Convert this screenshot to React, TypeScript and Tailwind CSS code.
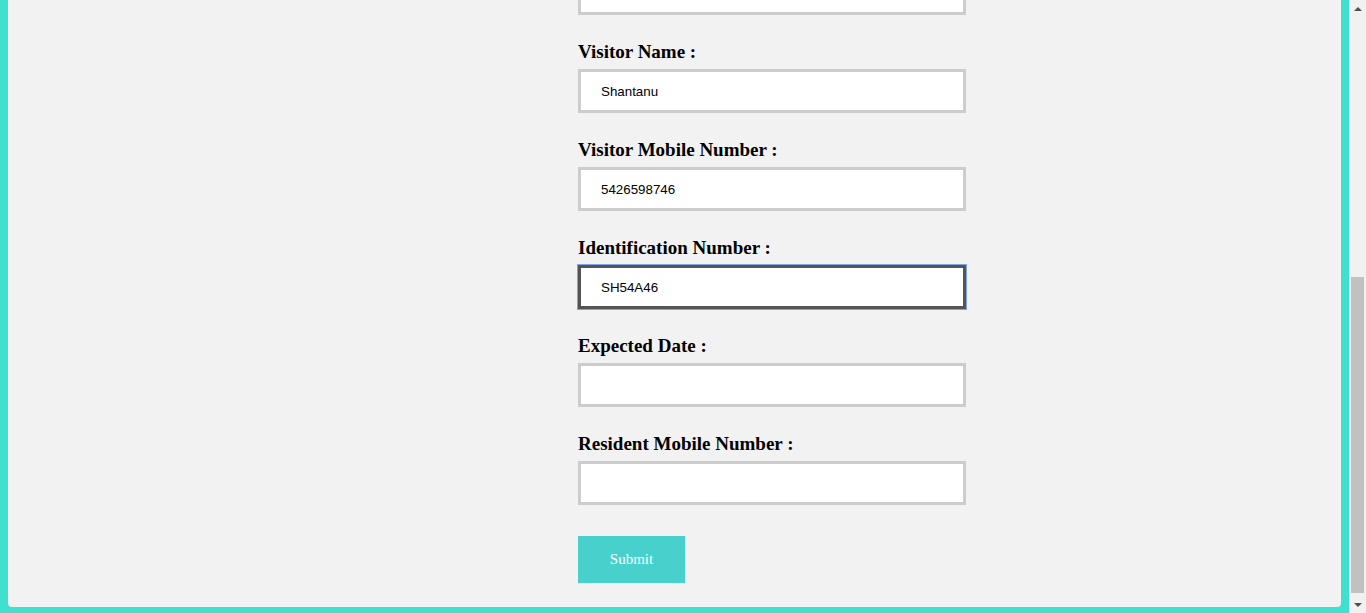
import React, { useLayoutEffect, useRef, useState } from 'react';

interface VisitorForm {
  flatNumber: string;
  residentName: string;
  purpose: string;
  vehicleNumber: string;
  visitorName: string;
  visitorMobile: string;
  idNumber: string;
  expectedDate: string;
  residentMobile: string;
}

const fields: { name: keyof VisitorForm; label: string }[] = [
  { name: 'flatNumber', label: 'Flat Number :' },
  { name: 'residentName', label: 'Resident Name :' },
  { name: 'purpose', label: 'Purpose of Visit :' },
  { name: 'vehicleNumber', label: 'Vehicle Number :' },
  { name: 'visitorName', label: 'Visitor Name :' },
  { name: 'visitorMobile', label: 'Visitor Mobile Number :' },
  { name: 'idNumber', label: 'Identification Number :' },
  { name: 'expectedDate', label: 'Expected Date :' },
  { name: 'residentMobile', label: 'Resident Mobile Number :' },
];

const inputBase = `block h-[44px] w-full border-[3px] border-solid bg-white pl-5 font-["Liberation_Sans",Arial,sans-serif] text-[13.33px] text-black`;
const inputIdle = `${inputBase} border-[#cccccc] outline-none`;
const inputFocused = `${inputBase} border-[#545454] outline-1 outline-solid outline-offset-0 outline-[#7aa6e6]`;

export default function App() {
  const scrollRef = useRef<HTMLDivElement>(null);
  const [form, setForm] = useState<VisitorForm>({
    flatNumber: '',
    residentName: '',
    purpose: '',
    vehicleNumber: '',
    visitorName: 'Shantanu',
    visitorMobile: '5426598746',
    idNumber: 'SH54A46',
    expectedDate: '',
    residentMobile: '',
  });

  // page is shown scrolled to the bottom of the form
  useLayoutEffect(() => {
    const el = scrollRef.current;
    if (el) el.scrollTop = el.scrollHeight;
  }, []);

  const handleChange = (e: React.ChangeEvent<HTMLInputElement>) => {
    const { name, value } = e.target;
    setForm(prev => ({ ...prev, [name]: value }));
  };

  return (
    <div className="flex h-[613px] w-full">
      <div
        ref={scrollRef}
        className="h-full flex-1 overflow-y-scroll bg-[#40e0d0] px-2 pb-[6px] pt-2 [scrollbar-width:none]"
      >
        <div className="rounded-[4px] bg-[#f2f2f2] pb-6 pl-[570px] pt-10">
          <h2 className="mb-[50px] font-['Liberation_Serif',serif] text-[28px] font-bold text-black">
            Add Visitor
          </h2>
          <form className="w-[388px]" onSubmit={e => e.preventDefault()}>
            {fields.map(f => (
              <div key={f.name} className="mb-[23px]">
                <label
                  htmlFor={f.name}
                  className="mb-[5px] block pt-[2px] font-['Liberation_Serif',serif] text-[19px] font-bold leading-[24px] text-black"
                >
                  {f.label}
                </label>
                <input
                  id={f.name}
                  name={f.name}
                  type="text"
                  value={form[f.name]}
                  onChange={handleChange}
                  className={f.name === 'idNumber' ? inputFocused : inputIdle}
                />
              </div>
            ))}
            <button
              type="submit"
              className="mt-2 h-[47px] w-[107px] bg-[#48d1cc] font-['Liberation_Serif',serif] text-[15px] text-white"
            >
              Submit
            </button>
          </form>
        </div>
      </div>

      {/* window scrollbar */}
      <div className="flex w-[17px] flex-col bg-[#f1f1f1]">
        <div className="flex h-[17px] items-center justify-center">
          <div className="h-0 w-0 border-x-[4px] border-b-[4px] border-x-transparent border-b-[#505050]" />
        </div>
        <div className="flex flex-1 flex-col justify-end px-[2px] pb-[3px]">
          <div className="h-[316px] bg-[#c1c1c1]" />
        </div>
        <div className="flex h-[17px] items-center justify-center">
          <div className="h-0 w-0 border-x-[4px] border-t-[4px] border-x-transparent border-t-[#505050]" />
        </div>
      </div>
    </div>
  );
}
